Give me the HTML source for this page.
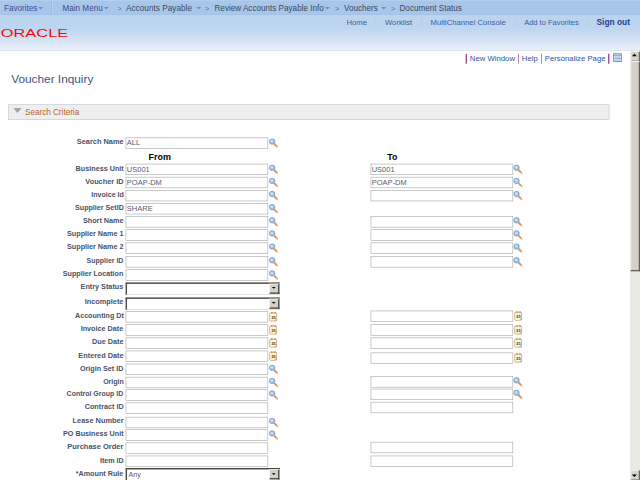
<!DOCTYPE html>
<html lang="en"><head><meta charset="utf-8"><title>Voucher Inquiry</title>
<style>
html,body{margin:0;padding:0;background:#fff;overflow:hidden;width:640px;height:480px}
body{font-family:"Liberation Sans",Arial,sans-serif;}
#pg{position:absolute;left:0;top:0;width:1024px;height:768px;transform:scale(0.625);transform-origin:0 0;overflow:hidden;background:#fff}
#pg *{position:absolute;box-sizing:border-box;white-space:nowrap}
.nav{top:0;left:0;width:1024px;height:24px;background:#a7c6e9;border-top:1px solid #b9d3ef;border-bottom:1px solid #9fc0e6}
.hd{top:24px;left:0;width:1024px;height:56px;background:linear-gradient(#bbd3ee 0%,#bed5ef 38%,#d2e1f4 68%,#e9f0f9 100%);}
.hdl{top:80px;left:0;width:1024px;height:1.2px;background:#cdd2d9}
.bc{font-size:13px;line-height:16px;top:6.2px;color:#3b4a5e}
.bm{font-size:13px;line-height:16px;top:6.2px;color:#3d4b8f}
.gt{font-size:11.5px;line-height:16px;top:6.2px;color:#5d6b86}
.ar{width:0;height:0;border-left:4px solid transparent;border-right:4px solid transparent;border-top:4px solid #5c90d0;top:11.4px}
.n2{font-size:12.3px;line-height:16px;top:27.8px;color:#3a5da0}
.so{font-size:13.4px;line-height:16px;top:27.8px;color:#1d3f8e;font-weight:bold}
.s2{top:27px;width:1px;height:16px;background:#b7c9e3}
.n3{font-size:12.4px;line-height:16px;top:86px;color:#3354a0}
.s3{top:86px;width:1.7px;height:15.5px;background:#8f3a8c}
.logo{left:0.8px;top:41px;font-size:17.6px;line-height:24px;color:#f60a0a;transform:scaleX(1.485);transform-origin:0 0;letter-spacing:0.1px}
.title{left:18px;top:114px;font-size:18.9px;line-height:24px;color:#3a5687}
.sc{left:13px;top:167px;width:962px;height:24.5px;background:#efefef;border:1px solid #c3cbd3}
.sct{left:40px;top:172.4px;font-size:13px;line-height:16px;color:#b5622b}
.tri{left:21px;top:173px;width:0;height:0;border-left:6.5px solid transparent;border-right:6.5px solid transparent;border-top:7px solid #a3a3a3}
.lb{font-size:12.6px;line-height:14px;font-weight:bold;color:#495268;right:826.4px;transform-origin:100% 50%;margin-top:0.3px}
.in{height:18px;width:228px;border:1px solid #a9a9a9;background:#fff}
.it{font-size:12px;line-height:12px;color:#5a5a6e}
.se{height:20px;width:247px;background:#fff;border:1px solid #d4d0c8;border-top:2.2px solid #2a2a2a;border-left:2px solid #333;}
.sb{width:16px;height:16px;background:#d4d0c8;border:1px solid #fff;border-right:2px solid #404040;border-bottom:2px solid #404040}
.sa{width:0;height:0;border-left:3.8px solid transparent;border-right:3.8px solid transparent;border-top:3.8px solid #000}
.hh{font-size:14.2px;line-height:16px;font-weight:bold;color:#000}
.sbar{left:1008px;top:82.4px;width:16px;height:686px;background:#e9e8e2}
.sth{left:1008px;top:98.4px;width:16px;height:336px;background:#d4d0c8;border-left:2px solid #f1efea;border-top:1px solid #fff;border-right:2px solid #606060;border-bottom:2px solid #606060}
.sbt{left:1008px;width:16px;height:16px;background:#d6d3cb;border-left:2px solid #f1efea;border-top:1px solid #fff;border-right:2px solid #6a6a6a;border-bottom:1.6px solid #85837c}
</style></head>
<body>
<div id="pg">
<div class="nav"></div><div class="hd"></div><div class="hdl"></div>
<span class="bm" style="left:6.4px">Favorites</span>
<i class="ar" style="left:60.8px"></i>
<i style="left:82px;top:1px;width:1px;height:22px;background:#8fb2dc"></i><i style="left:83px;top:1px;width:1px;height:22px;background:#c2d8f2"></i>
<span class="bm" style="left:100.0px">Main Menu</span>
<i class="ar" style="left:166.4px"></i>
<span class="gt" style="left:188.0px">&gt;</span>
<span class="bc" style="left:201.6px;font-size:13.2px">Accounts Payable</span>
<i class="ar" style="left:313.6px"></i>
<span class="gt" style="left:328.0px">&gt;</span>
<span class="bc" style="left:343.2px">Review Accounts Payable Info</span>
<i class="ar" style="left:520.0px"></i>
<span class="gt" style="left:536.0px">&gt;</span>
<span class="bc" style="left:550.4px">Vouchers</span>
<i class="ar" style="left:609.6px"></i>
<span class="gt" style="left:625.6px">&gt;</span>
<span class="bc" style="left:639.2px">Document Status</span>
<span class="n2" style="left:554.4px">Home</span>
<span class="n2" style="left:616.0px">Worklist</span>
<span class="n2" style="left:688.8px">MultiChannel Console</span>
<span class="n2" style="left:838.7px;font-size:12px">Add to Favorites</span>
<span class="so" style="left:954.4px">Sign out</span>
<i class="s2" style="left:600.8px"></i>
<i class="s2" style="left:674.0px"></i>
<i class="s2" style="left:824.0px"></i>
<i class="s2" style="left:940.0px"></i>
<span class="logo">ORACLE</span>
<span class="n3" style="left:751.7px">New Window</span>
<span class="n3" style="left:834.9px">Help</span>
<span class="n3" style="left:871.7px">Personalize Page</span>
<i class="s3" style="left:745.0px"></i>
<i class="s3" style="left:828.5px"></i>
<i class="s3" style="left:865.6px"></i>
<i class="s3" style="left:973.4px"></i>
<svg style="left:981px;top:85px" width="14" height="14" viewBox="0 0 14 14"><rect x="0" y="0" width="14" height="14" fill="#4f84d6"/><rect x="1.5" y="4" width="11" height="8.5" fill="#dbe8fa"/><rect x="1.5" y="2" width="11" height="1.2" fill="#e8f0fc"/><path d="M4.5 5v7M7.5 5v7M10 5v7M1.5 8.5h11" stroke="#7fa6e0" stroke-width="1" fill="none"/></svg>
<span class="title">Voucher Inquiry</span>
<div class="sc"></div><svg style="left:20.6px;top:171.2px" width="14" height="10" viewBox="0 0 14 10"><polygon points="0,1.6 13.8,1.6 6.9,9.8" fill="#a6a6a6"/></svg><span class="sct">Search Criteria</span>
<span class="lb" style="top:219.6px;transform:scaleX(0.940)">Search Name</span>
<div class="in" style="left:201.0px;top:219.6px"></div>
<span class="it" style="left:202.9px;top:222.4px">ALL</span>
<svg style="left:429.6px;top:220.6px" width="17" height="17" viewBox="0 0 17 17"><path d="M12.4 12.8L13.7 14.1" stroke="#a9c2de" stroke-width="2.6" stroke-linecap="round"/><path d="M8.6 9L12.6 13" stroke="#e8924a" stroke-width="3.2" stroke-linecap="butt"/><circle cx="5.4" cy="5.4" r="4.3" fill="#9cc7f5" stroke="#8393aa" stroke-width="1.3"/><circle cx="4.8" cy="4.6" r="2" fill="#cbe3fb"/></svg>
<span class="lb" style="top:262.0px;transform:scaleX(0.917)">Business Unit</span>
<div class="in" style="left:201.0px;top:262.0px"></div>
<span class="it" style="left:202.9px;top:264.8px">US001</span>
<svg style="left:429.6px;top:263.0px" width="17" height="17" viewBox="0 0 17 17"><path d="M12.4 12.8L13.7 14.1" stroke="#a9c2de" stroke-width="2.6" stroke-linecap="round"/><path d="M8.6 9L12.6 13" stroke="#e8924a" stroke-width="3.2" stroke-linecap="butt"/><circle cx="5.4" cy="5.4" r="4.3" fill="#9cc7f5" stroke="#8393aa" stroke-width="1.3"/><circle cx="4.8" cy="4.6" r="2" fill="#cbe3fb"/></svg>
<div class="in" style="left:592.8px;top:262.0px"></div>
<span class="it" style="left:594.7px;top:264.8px">US001</span>
<svg style="left:821.4px;top:263.0px" width="17" height="17" viewBox="0 0 17 17"><path d="M12.4 12.8L13.7 14.1" stroke="#a9c2de" stroke-width="2.6" stroke-linecap="round"/><path d="M8.6 9L12.6 13" stroke="#e8924a" stroke-width="3.2" stroke-linecap="butt"/><circle cx="5.4" cy="5.4" r="4.3" fill="#9cc7f5" stroke="#8393aa" stroke-width="1.3"/><circle cx="4.8" cy="4.6" r="2" fill="#cbe3fb"/></svg>
<span class="lb" style="top:283.0px;transform:scaleX(0.931)">Voucher ID</span>
<div class="in" style="left:201.0px;top:283.0px"></div>
<span class="it" style="left:202.9px;top:285.8px">POAP-DM</span>
<svg style="left:429.6px;top:284.0px" width="17" height="17" viewBox="0 0 17 17"><path d="M12.4 12.8L13.7 14.1" stroke="#a9c2de" stroke-width="2.6" stroke-linecap="round"/><path d="M8.6 9L12.6 13" stroke="#e8924a" stroke-width="3.2" stroke-linecap="butt"/><circle cx="5.4" cy="5.4" r="4.3" fill="#9cc7f5" stroke="#8393aa" stroke-width="1.3"/><circle cx="4.8" cy="4.6" r="2" fill="#cbe3fb"/></svg>
<div class="in" style="left:592.8px;top:283.0px"></div>
<span class="it" style="left:594.7px;top:285.8px">POAP-DM</span>
<svg style="left:821.4px;top:284.0px" width="17" height="17" viewBox="0 0 17 17"><path d="M12.4 12.8L13.7 14.1" stroke="#a9c2de" stroke-width="2.6" stroke-linecap="round"/><path d="M8.6 9L12.6 13" stroke="#e8924a" stroke-width="3.2" stroke-linecap="butt"/><circle cx="5.4" cy="5.4" r="4.3" fill="#9cc7f5" stroke="#8393aa" stroke-width="1.3"/><circle cx="4.8" cy="4.6" r="2" fill="#cbe3fb"/></svg>
<span class="lb" style="top:304.0px;transform:scaleX(0.898)">Invoice Id</span>
<div class="in" style="left:201.0px;top:304.0px"></div>
<svg style="left:429.6px;top:305.0px" width="17" height="17" viewBox="0 0 17 17"><path d="M12.4 12.8L13.7 14.1" stroke="#a9c2de" stroke-width="2.6" stroke-linecap="round"/><path d="M8.6 9L12.6 13" stroke="#e8924a" stroke-width="3.2" stroke-linecap="butt"/><circle cx="5.4" cy="5.4" r="4.3" fill="#9cc7f5" stroke="#8393aa" stroke-width="1.3"/><circle cx="4.8" cy="4.6" r="2" fill="#cbe3fb"/></svg>
<div class="in" style="left:592.8px;top:304.0px"></div>
<svg style="left:821.4px;top:305.0px" width="17" height="17" viewBox="0 0 17 17"><path d="M12.4 12.8L13.7 14.1" stroke="#a9c2de" stroke-width="2.6" stroke-linecap="round"/><path d="M8.6 9L12.6 13" stroke="#e8924a" stroke-width="3.2" stroke-linecap="butt"/><circle cx="5.4" cy="5.4" r="4.3" fill="#9cc7f5" stroke="#8393aa" stroke-width="1.3"/><circle cx="4.8" cy="4.6" r="2" fill="#cbe3fb"/></svg>
<span class="lb" style="top:325.0px;transform:scaleX(0.907)">Supplier SetID</span>
<div class="in" style="left:201.0px;top:325.0px"></div>
<span class="it" style="left:202.9px;top:327.8px">SHARE</span>
<svg style="left:429.6px;top:326.0px" width="17" height="17" viewBox="0 0 17 17"><path d="M12.4 12.8L13.7 14.1" stroke="#a9c2de" stroke-width="2.6" stroke-linecap="round"/><path d="M8.6 9L12.6 13" stroke="#e8924a" stroke-width="3.2" stroke-linecap="butt"/><circle cx="5.4" cy="5.4" r="4.3" fill="#9cc7f5" stroke="#8393aa" stroke-width="1.3"/><circle cx="4.8" cy="4.6" r="2" fill="#cbe3fb"/></svg>
<span class="lb" style="top:346.0px;transform:scaleX(0.919)">Short Name</span>
<div class="in" style="left:201.0px;top:346.0px"></div>
<svg style="left:429.6px;top:347.0px" width="17" height="17" viewBox="0 0 17 17"><path d="M12.4 12.8L13.7 14.1" stroke="#a9c2de" stroke-width="2.6" stroke-linecap="round"/><path d="M8.6 9L12.6 13" stroke="#e8924a" stroke-width="3.2" stroke-linecap="butt"/><circle cx="5.4" cy="5.4" r="4.3" fill="#9cc7f5" stroke="#8393aa" stroke-width="1.3"/><circle cx="4.8" cy="4.6" r="2" fill="#cbe3fb"/></svg>
<div class="in" style="left:592.8px;top:346.0px"></div>
<svg style="left:821.4px;top:347.0px" width="17" height="17" viewBox="0 0 17 17"><path d="M12.4 12.8L13.7 14.1" stroke="#a9c2de" stroke-width="2.6" stroke-linecap="round"/><path d="M8.6 9L12.6 13" stroke="#e8924a" stroke-width="3.2" stroke-linecap="butt"/><circle cx="5.4" cy="5.4" r="4.3" fill="#9cc7f5" stroke="#8393aa" stroke-width="1.3"/><circle cx="4.8" cy="4.6" r="2" fill="#cbe3fb"/></svg>
<span class="lb" style="top:367.0px;transform:scaleX(0.917)">Supplier Name 1</span>
<div class="in" style="left:201.0px;top:367.0px"></div>
<svg style="left:429.6px;top:368.0px" width="17" height="17" viewBox="0 0 17 17"><path d="M12.4 12.8L13.7 14.1" stroke="#a9c2de" stroke-width="2.6" stroke-linecap="round"/><path d="M8.6 9L12.6 13" stroke="#e8924a" stroke-width="3.2" stroke-linecap="butt"/><circle cx="5.4" cy="5.4" r="4.3" fill="#9cc7f5" stroke="#8393aa" stroke-width="1.3"/><circle cx="4.8" cy="4.6" r="2" fill="#cbe3fb"/></svg>
<div class="in" style="left:592.8px;top:367.0px"></div>
<svg style="left:821.4px;top:368.0px" width="17" height="17" viewBox="0 0 17 17"><path d="M12.4 12.8L13.7 14.1" stroke="#a9c2de" stroke-width="2.6" stroke-linecap="round"/><path d="M8.6 9L12.6 13" stroke="#e8924a" stroke-width="3.2" stroke-linecap="butt"/><circle cx="5.4" cy="5.4" r="4.3" fill="#9cc7f5" stroke="#8393aa" stroke-width="1.3"/><circle cx="4.8" cy="4.6" r="2" fill="#cbe3fb"/></svg>
<span class="lb" style="top:388.0px;transform:scaleX(0.917)">Supplier Name 2</span>
<div class="in" style="left:201.0px;top:388.0px"></div>
<svg style="left:429.6px;top:389.0px" width="17" height="17" viewBox="0 0 17 17"><path d="M12.4 12.8L13.7 14.1" stroke="#a9c2de" stroke-width="2.6" stroke-linecap="round"/><path d="M8.6 9L12.6 13" stroke="#e8924a" stroke-width="3.2" stroke-linecap="butt"/><circle cx="5.4" cy="5.4" r="4.3" fill="#9cc7f5" stroke="#8393aa" stroke-width="1.3"/><circle cx="4.8" cy="4.6" r="2" fill="#cbe3fb"/></svg>
<div class="in" style="left:592.8px;top:388.0px"></div>
<svg style="left:821.4px;top:389.0px" width="17" height="17" viewBox="0 0 17 17"><path d="M12.4 12.8L13.7 14.1" stroke="#a9c2de" stroke-width="2.6" stroke-linecap="round"/><path d="M8.6 9L12.6 13" stroke="#e8924a" stroke-width="3.2" stroke-linecap="butt"/><circle cx="5.4" cy="5.4" r="4.3" fill="#9cc7f5" stroke="#8393aa" stroke-width="1.3"/><circle cx="4.8" cy="4.6" r="2" fill="#cbe3fb"/></svg>
<span class="lb" style="top:410.0px;transform:scaleX(0.888)">Supplier ID</span>
<div class="in" style="left:201.0px;top:410.0px"></div>
<svg style="left:429.6px;top:411.0px" width="17" height="17" viewBox="0 0 17 17"><path d="M12.4 12.8L13.7 14.1" stroke="#a9c2de" stroke-width="2.6" stroke-linecap="round"/><path d="M8.6 9L12.6 13" stroke="#e8924a" stroke-width="3.2" stroke-linecap="butt"/><circle cx="5.4" cy="5.4" r="4.3" fill="#9cc7f5" stroke="#8393aa" stroke-width="1.3"/><circle cx="4.8" cy="4.6" r="2" fill="#cbe3fb"/></svg>
<div class="in" style="left:592.8px;top:410.0px"></div>
<svg style="left:821.4px;top:411.0px" width="17" height="17" viewBox="0 0 17 17"><path d="M12.4 12.8L13.7 14.1" stroke="#a9c2de" stroke-width="2.6" stroke-linecap="round"/><path d="M8.6 9L12.6 13" stroke="#e8924a" stroke-width="3.2" stroke-linecap="butt"/><circle cx="5.4" cy="5.4" r="4.3" fill="#9cc7f5" stroke="#8393aa" stroke-width="1.3"/><circle cx="4.8" cy="4.6" r="2" fill="#cbe3fb"/></svg>
<span class="lb" style="top:431.0px;transform:scaleX(0.912)">Supplier Location</span>
<div class="in" style="left:201.0px;top:431.0px"></div>
<svg style="left:429.6px;top:432.0px" width="17" height="17" viewBox="0 0 17 17"><path d="M12.4 12.8L13.7 14.1" stroke="#a9c2de" stroke-width="2.6" stroke-linecap="round"/><path d="M8.6 9L12.6 13" stroke="#e8924a" stroke-width="3.2" stroke-linecap="butt"/><circle cx="5.4" cy="5.4" r="4.3" fill="#9cc7f5" stroke="#8393aa" stroke-width="1.3"/><circle cx="4.8" cy="4.6" r="2" fill="#cbe3fb"/></svg>
<span class="lb" style="top:452.1px;transform:scaleX(0.920)">Entry Status</span>
<div class="se" style="left:201.0px;top:451.6px"></div><div class="sb" style="left:430.5px;top:453.8px"></div><i class="sa" style="left:435.0px;top:459.2px"></i>
<span class="lb" style="top:476.1px;transform:scaleX(0.933)">Incomplete</span>
<div class="se" style="left:201.0px;top:475.6px"></div><div class="sb" style="left:430.5px;top:477.8px"></div><i class="sa" style="left:435.0px;top:483.2px"></i>
<span class="lb" style="top:498.0px;transform:scaleX(0.907)">Accounting Dt</span>
<div class="in" style="left:201.0px;top:498.0px"></div>
<div style="left:431.2px;top:500.4px;width:12px;height:14px;background:#fffae2;border:1.3px solid #bd8a42;border-radius:2px"></div><span style="left:434.0px;top:504.0px;font-size:7px;line-height:8px;font-weight:bold;color:#1a1a1a;letter-spacing:-0.2px">31</span><i style="left:434.2px;top:499.4px;width:2px;height:3px;background:#bd8a42"></i><i style="left:438.7px;top:499.4px;width:2px;height:3px;background:#bd8a42"></i><i style="left:438.7px;top:509.4px;width:0;height:0;border-left:4px solid transparent;border-bottom:4px solid #d9a55a"></i>
<div class="in" style="left:592.8px;top:497.0px"></div>
<div style="left:823.0px;top:499.4px;width:12px;height:14px;background:#fffae2;border:1.3px solid #bd8a42;border-radius:2px"></div><span style="left:825.8px;top:503.0px;font-size:7px;line-height:8px;font-weight:bold;color:#1a1a1a;letter-spacing:-0.2px">31</span><i style="left:826.0px;top:498.4px;width:2px;height:3px;background:#bd8a42"></i><i style="left:830.5px;top:498.4px;width:2px;height:3px;background:#bd8a42"></i><i style="left:830.5px;top:508.4px;width:0;height:0;border-left:4px solid transparent;border-bottom:4px solid #d9a55a"></i>
<span class="lb" style="top:519.0px;transform:scaleX(0.919)">Invoice Date</span>
<div class="in" style="left:201.0px;top:519.0px"></div>
<div style="left:431.2px;top:521.4px;width:12px;height:14px;background:#fffae2;border:1.3px solid #bd8a42;border-radius:2px"></div><span style="left:434.0px;top:525.0px;font-size:7px;line-height:8px;font-weight:bold;color:#1a1a1a;letter-spacing:-0.2px">31</span><i style="left:434.2px;top:520.4px;width:2px;height:3px;background:#bd8a42"></i><i style="left:438.7px;top:520.4px;width:2px;height:3px;background:#bd8a42"></i><i style="left:438.7px;top:530.4px;width:0;height:0;border-left:4px solid transparent;border-bottom:4px solid #d9a55a"></i>
<div class="in" style="left:592.8px;top:519.0px"></div>
<div style="left:823.0px;top:521.4px;width:12px;height:14px;background:#fffae2;border:1.3px solid #bd8a42;border-radius:2px"></div><span style="left:825.8px;top:525.0px;font-size:7px;line-height:8px;font-weight:bold;color:#1a1a1a;letter-spacing:-0.2px">31</span><i style="left:826.0px;top:520.4px;width:2px;height:3px;background:#bd8a42"></i><i style="left:830.5px;top:520.4px;width:2px;height:3px;background:#bd8a42"></i><i style="left:830.5px;top:530.4px;width:0;height:0;border-left:4px solid transparent;border-bottom:4px solid #d9a55a"></i>
<span class="lb" style="top:540.0px;transform:scaleX(0.920)">Due Date</span>
<div class="in" style="left:201.0px;top:540.0px"></div>
<div style="left:431.2px;top:542.4px;width:12px;height:14px;background:#fffae2;border:1.3px solid #bd8a42;border-radius:2px"></div><span style="left:434.0px;top:546.0px;font-size:7px;line-height:8px;font-weight:bold;color:#1a1a1a;letter-spacing:-0.2px">31</span><i style="left:434.2px;top:541.4px;width:2px;height:3px;background:#bd8a42"></i><i style="left:438.7px;top:541.4px;width:2px;height:3px;background:#bd8a42"></i><i style="left:438.7px;top:551.4px;width:0;height:0;border-left:4px solid transparent;border-bottom:4px solid #d9a55a"></i>
<div class="in" style="left:592.8px;top:540.0px"></div>
<div style="left:823.0px;top:542.4px;width:12px;height:14px;background:#fffae2;border:1.3px solid #bd8a42;border-radius:2px"></div><span style="left:825.8px;top:546.0px;font-size:7px;line-height:8px;font-weight:bold;color:#1a1a1a;letter-spacing:-0.2px">31</span><i style="left:826.0px;top:541.4px;width:2px;height:3px;background:#bd8a42"></i><i style="left:830.5px;top:541.4px;width:2px;height:3px;background:#bd8a42"></i><i style="left:830.5px;top:551.4px;width:0;height:0;border-left:4px solid transparent;border-bottom:4px solid #d9a55a"></i>
<span class="lb" style="top:561.0px;transform:scaleX(0.931)">Entered Date</span>
<div class="in" style="left:201.0px;top:561.0px"></div>
<div style="left:431.2px;top:563.4px;width:12px;height:14px;background:#fffae2;border:1.3px solid #bd8a42;border-radius:2px"></div><span style="left:434.0px;top:567.0px;font-size:7px;line-height:8px;font-weight:bold;color:#1a1a1a;letter-spacing:-0.2px">31</span><i style="left:434.2px;top:562.4px;width:2px;height:3px;background:#bd8a42"></i><i style="left:438.7px;top:562.4px;width:2px;height:3px;background:#bd8a42"></i><i style="left:438.7px;top:572.4px;width:0;height:0;border-left:4px solid transparent;border-bottom:4px solid #d9a55a"></i>
<div class="in" style="left:592.8px;top:563.6px"></div>
<div style="left:823.0px;top:566.0px;width:12px;height:14px;background:#fffae2;border:1.3px solid #bd8a42;border-radius:2px"></div><span style="left:825.8px;top:569.6px;font-size:7px;line-height:8px;font-weight:bold;color:#1a1a1a;letter-spacing:-0.2px">31</span><i style="left:826.0px;top:565.0px;width:2px;height:3px;background:#bd8a42"></i><i style="left:830.5px;top:565.0px;width:2px;height:3px;background:#bd8a42"></i><i style="left:830.5px;top:575.0px;width:0;height:0;border-left:4px solid transparent;border-bottom:4px solid #d9a55a"></i>
<span class="lb" style="top:582.0px;transform:scaleX(0.908)">Origin Set ID</span>
<div class="in" style="left:201.0px;top:582.0px"></div>
<svg style="left:429.6px;top:583.0px" width="17" height="17" viewBox="0 0 17 17"><path d="M12.4 12.8L13.7 14.1" stroke="#a9c2de" stroke-width="2.6" stroke-linecap="round"/><path d="M8.6 9L12.6 13" stroke="#e8924a" stroke-width="3.2" stroke-linecap="butt"/><circle cx="5.4" cy="5.4" r="4.3" fill="#9cc7f5" stroke="#8393aa" stroke-width="1.3"/><circle cx="4.8" cy="4.6" r="2" fill="#cbe3fb"/></svg>
<span class="lb" style="top:603.0px;transform:scaleX(0.891)">Origin</span>
<div class="in" style="left:201.0px;top:603.0px"></div>
<svg style="left:429.6px;top:604.0px" width="17" height="17" viewBox="0 0 17 17"><path d="M12.4 12.8L13.7 14.1" stroke="#a9c2de" stroke-width="2.6" stroke-linecap="round"/><path d="M8.6 9L12.6 13" stroke="#e8924a" stroke-width="3.2" stroke-linecap="butt"/><circle cx="5.4" cy="5.4" r="4.3" fill="#9cc7f5" stroke="#8393aa" stroke-width="1.3"/><circle cx="4.8" cy="4.6" r="2" fill="#cbe3fb"/></svg>
<div class="in" style="left:592.8px;top:602.0px"></div>
<svg style="left:821.4px;top:603.0px" width="17" height="17" viewBox="0 0 17 17"><path d="M12.4 12.8L13.7 14.1" stroke="#a9c2de" stroke-width="2.6" stroke-linecap="round"/><path d="M8.6 9L12.6 13" stroke="#e8924a" stroke-width="3.2" stroke-linecap="butt"/><circle cx="5.4" cy="5.4" r="4.3" fill="#9cc7f5" stroke="#8393aa" stroke-width="1.3"/><circle cx="4.8" cy="4.6" r="2" fill="#cbe3fb"/></svg>
<span class="lb" style="top:623.0px;transform:scaleX(0.887)">Control Group ID</span>
<div class="in" style="left:201.0px;top:623.0px"></div>
<svg style="left:429.6px;top:624.0px" width="17" height="17" viewBox="0 0 17 17"><path d="M12.4 12.8L13.7 14.1" stroke="#a9c2de" stroke-width="2.6" stroke-linecap="round"/><path d="M8.6 9L12.6 13" stroke="#e8924a" stroke-width="3.2" stroke-linecap="butt"/><circle cx="5.4" cy="5.4" r="4.3" fill="#9cc7f5" stroke="#8393aa" stroke-width="1.3"/><circle cx="4.8" cy="4.6" r="2" fill="#cbe3fb"/></svg>
<div class="in" style="left:592.8px;top:622.0px"></div>
<svg style="left:821.4px;top:623.0px" width="17" height="17" viewBox="0 0 17 17"><path d="M12.4 12.8L13.7 14.1" stroke="#a9c2de" stroke-width="2.6" stroke-linecap="round"/><path d="M8.6 9L12.6 13" stroke="#e8924a" stroke-width="3.2" stroke-linecap="butt"/><circle cx="5.4" cy="5.4" r="4.3" fill="#9cc7f5" stroke="#8393aa" stroke-width="1.3"/><circle cx="4.8" cy="4.6" r="2" fill="#cbe3fb"/></svg>
<span class="lb" style="top:644.0px;transform:scaleX(0.919)">Contract ID</span>
<div class="in" style="left:201.0px;top:644.0px"></div>
<div class="in" style="left:592.8px;top:643.0px"></div>
<span class="lb" style="top:665.8px;transform:scaleX(0.943)">Lease Number</span>
<div class="in" style="left:201.0px;top:667.0px"></div>
<svg style="left:429.6px;top:668.0px" width="17" height="17" viewBox="0 0 17 17"><path d="M12.4 12.8L13.7 14.1" stroke="#a9c2de" stroke-width="2.6" stroke-linecap="round"/><path d="M8.6 9L12.6 13" stroke="#e8924a" stroke-width="3.2" stroke-linecap="butt"/><circle cx="5.4" cy="5.4" r="4.3" fill="#9cc7f5" stroke="#8393aa" stroke-width="1.3"/><circle cx="4.8" cy="4.6" r="2" fill="#cbe3fb"/></svg>
<span class="lb" style="top:687.0px;transform:scaleX(0.917)">PO Business Unit</span>
<div class="in" style="left:201.0px;top:687.0px"></div>
<svg style="left:429.6px;top:688.0px" width="17" height="17" viewBox="0 0 17 17"><path d="M12.4 12.8L13.7 14.1" stroke="#a9c2de" stroke-width="2.6" stroke-linecap="round"/><path d="M8.6 9L12.6 13" stroke="#e8924a" stroke-width="3.2" stroke-linecap="butt"/><circle cx="5.4" cy="5.4" r="4.3" fill="#9cc7f5" stroke="#8393aa" stroke-width="1.3"/><circle cx="4.8" cy="4.6" r="2" fill="#cbe3fb"/></svg>
<span class="lb" style="top:708.0px;transform:scaleX(0.953)">Purchase Order</span>
<div class="in" style="left:201.0px;top:708.0px"></div>
<div class="in" style="left:592.8px;top:707.0px"></div>
<span class="lb" style="top:729.0px;transform:scaleX(0.907)">Item ID</span>
<div class="in" style="left:201.0px;top:729.0px"></div>
<div class="in" style="left:592.8px;top:729.0px"></div>
<span class="lb" style="top:749.5px;transform:scaleX(0.915)">*Amount Rule</span>
<div class="se" style="left:201.0px;top:749.0px"></div><div class="sb" style="left:430.5px;top:751.2px"></div><i class="sa" style="left:435.0px;top:756.6px"></i>
<span class="it" style="left:205.5px;top:753.0px;font-size:11.5px">Any</span>
<span class="hh" style="left:237.8px;top:242.7px">From</span>
<span class="hh" style="left:619.5px;top:242.7px">To</span>
<div class="sbar"></div><div class="sbt" style="top:82.4px"></div><div class="sth"></div><div class="sbt" style="top:752px"></div>
<i class="sa" style="left:1010.8px;top:86px;border-width:0 4.5px 4.5px 4.5px;border-style:solid;border-color:transparent transparent #000 transparent"></i><i class="sa" style="left:1010.8px;top:758.6px;border-width:4.5px 4.5px 0 4.5px;border-style:solid;border-color:#000 transparent transparent transparent"></i>
</div>
</body></html>
